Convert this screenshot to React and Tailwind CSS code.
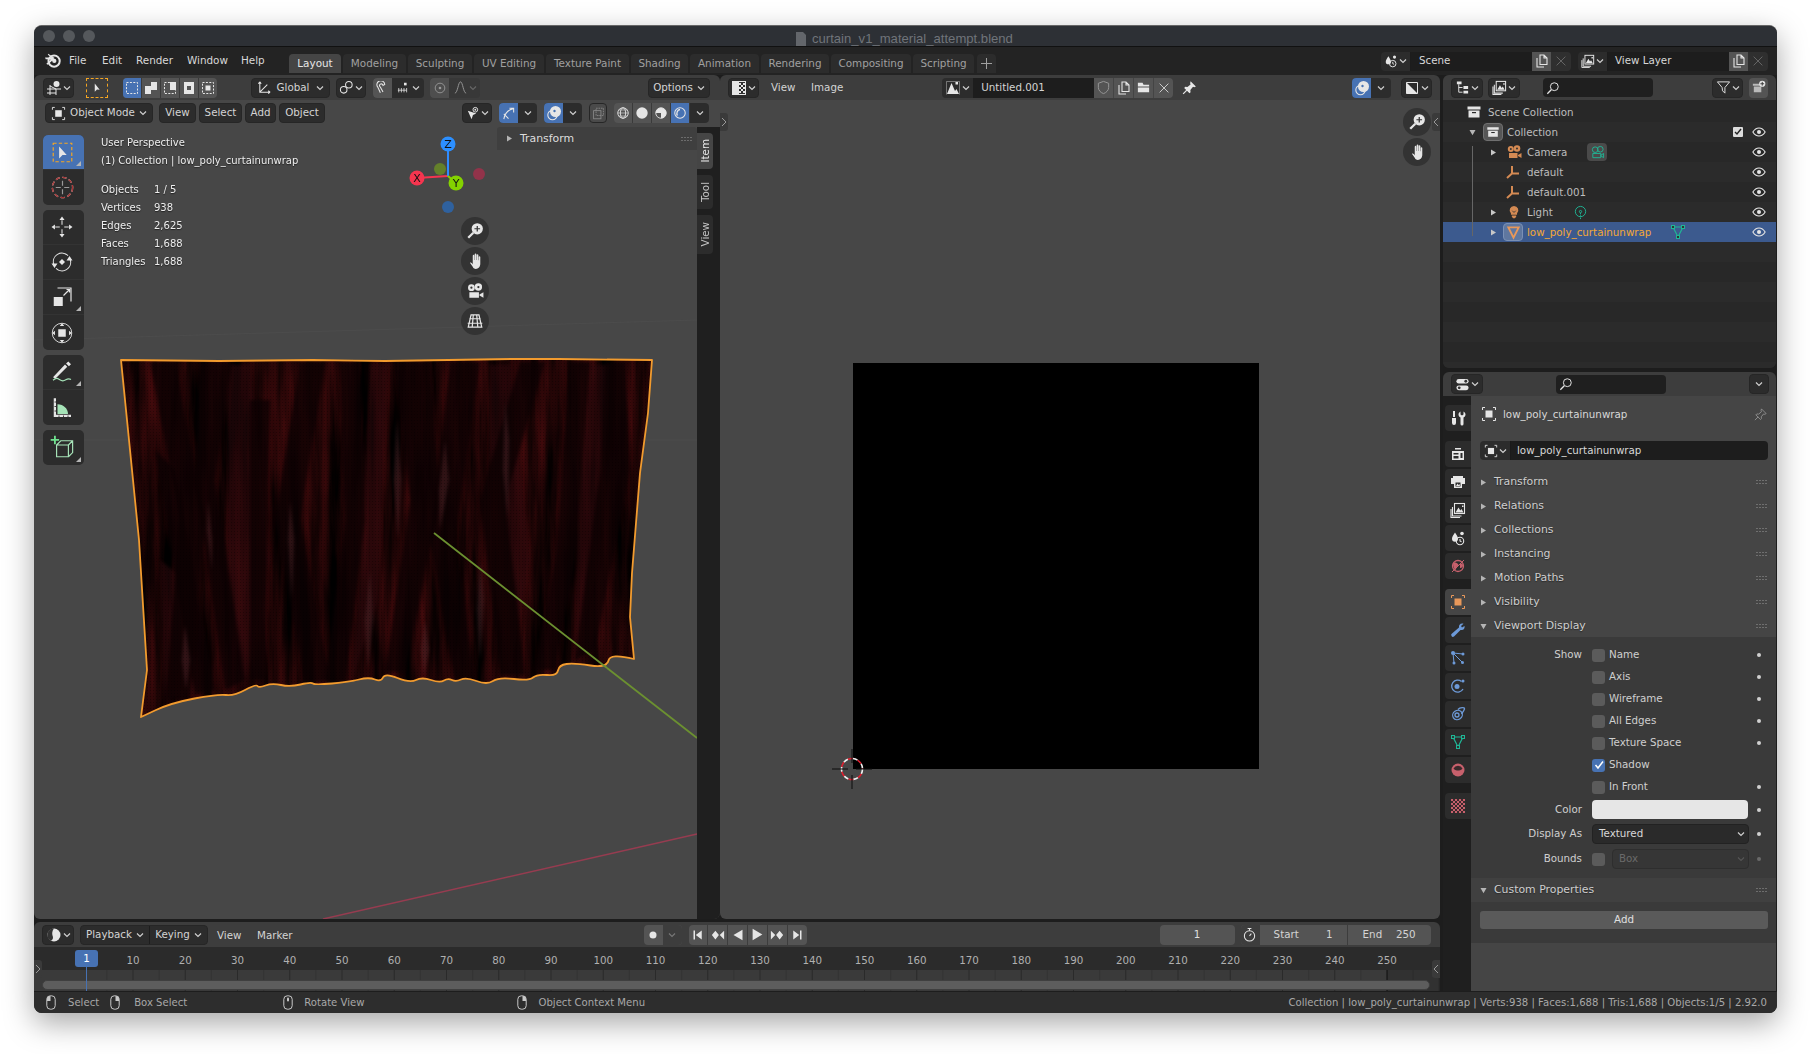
import React from 'react';

const W = '#e6e6e6';
const Chev = ({ c = '#cfcfcf', className = '' }) => (
  <svg width="8" height="8" viewBox="0 0 8 8" className={className}><path d="M1 2.5l3 3 3-3" stroke={c} fill="none" strokeWidth="1.2" /></svg>
);
const S = ({ s = 16, children, className = '', f = W }) => (
  <svg width={s} height={s} viewBox="0 0 16 16" fill={f} className={`shrink-0 ${className}`}>{children}</svg>
);
const L = (p) => <g fill="none" stroke={p.c || W} strokeWidth={p.w || 1.1}>{p.children}</g>;

const Blender = () => (
  <S s={17}>
    <circle cx="9.5" cy="9.5" r="5.3" fill="none" stroke={W} strokeWidth="1.9" />
    <circle cx="9.7" cy="9.4" r="2" />
    <path d="M1 6.2h6.5l2.2 1.6-1.6 1.5-3-1.6H1.6zM4 2.5l6 4-1.3 1.1L3.6 3.6zM2.2 12l4.3-4 1.2 1.2-4.3 3.8z" />
  </S>
);
const View3D = () => (
  <S>
    <circle cx="10.5" cy="4" r="3" /><L w="1"><path d="M1 9h14M4 5v10M10 9v6M1 13h9" /></L>
    <path d="M4 6l6 3" stroke={W} strokeWidth="1" />
  </S>
);
const Arrow = ({ s = 16, f = W }) => <S s={s} f={f}><path d="M5 2v11l3-3 3.6.2z" /></S>;
const Mode = ({ a, b }) => (
  <S>
    {a && <rect x="2.5" y="2.5" width="11" height="11" fill="none" stroke={W} strokeDasharray="2 1.4" />}
    {b}
  </S>
);
const ObjIcon = ({ c = W, s = 16 }) => (
  <S s={s} f={c}>
    <rect x="4.5" y="4.5" width="7" height="7" />
    <path d="M1.5 4V1.5H4M12 1.5h2.5V4M14.5 12v2.5H12M4 14.5H1.5V12" fill="none" stroke={c} strokeWidth="1" />
  </S>
);
const Eye = ({ c = '#e6e6e6', s = 14 }) => (
  <S s={s} f="none">
    <path d="M1 8c2-3.2 4.4-4.6 7-4.6S13 4.800 15 8c-2 3.200-4.400 4.600-7 4.600S3 11.200 1 8z" stroke={c} strokeWidth="1.3" />
    <circle cx="8" cy="8" r="2.300" fill={c} />
  </S>
);
const Search = ({ s = 15 }) => (
  <S s={s}><L><circle cx="9.500" cy="6.500" r="4.500" /><path d="M6 10l-4.500 4.500" strokeWidth="1.500" /></L></S>
);
const Box = ({ s = 16, c = W }) => (
  <S s={s} f={c}><path d="M1.500 2.500h13v3h-13zM2.500 6.500h11v7h-11z" /><rect x="6" y="8" width="4" height="1.200" fill="#2a2a2a" /></S>
);
const Layers = ({ s = 16 }) => (
  <S s={s}>
    <L><path d="M2.500 5v9h9M1 7v8.500h9" /><rect x="4.500" y="1.500" width="10" height="10" /></L>
    <path d="M5.500 10.500l3-5 1.800 3 1.200-1.500 2 3.500zM12 3.500h1.500V5H12z" />
  </S>
);
const Copy = () => (
  <S>
    <L><path d="M3 5v9h7M6 2h4l3 3v6.500H6zM10 2v3h3" /></L>
  </S>
);
const XI = ({ c = '#8b8b8b' }) => <S s={14}><path d="M3 3l10 10M13 3L3 13" stroke={c} strokeWidth="1.100" /></S>;
const SceneI = ({ s = 16 }) => (
  <S s={s}>
    <path d="M5 2.500c1.500 2.700 3 4.200 3 6.300A3 3 0 0 1 2 8.800c0-2.100 1.500-3.600 3-6.300z" /><circle cx="12" cy="3.500" r="1.800" />
    <L><circle cx="10" cy="11" r="3.700" /><path d="M10 9v2l1.500.8" /></L>
  </S>
);
const ImageEd = () => (
  <S>
    <rect x="1.500" y="1.500" width="13" height="13" fill="none" stroke={W} />
    <path d="M1.500 1.500h6.500v13H1.500z" /><path d="M8 3h2v2H8zM12 3h2v2h-2zM10 5h2v2h-2zM8 7h2v2H8zM12 7h2v2h-2zM10 9h2v2h-2zM8 11h2v2H8zM12 11h2v2h-2z" />
  </S>
);
const ImgI = () => <S><path d="M2 14L6.500 3 10 11l1.500-2 2.500 5z" /><rect x="10.500" y="2" width="2.500" height="2.500" /><path d="M1.500 14.500v-13h13v13" fill="none" stroke={W} strokeOpacity=".4" /></S>;
const OverlayI = () => (
  <S>
    <circle cx="9.500" cy="6.500" r="5.500" /><circle cx="6.500" cy="10" r="4.700" fill="none" stroke={W} strokeWidth="1.100" /><circle cx="8.500" cy="6" r="1.200" fill="#4772b3" />
  </S>
);
const Hand = ({ s = 18 }) => (
  <S s={s}>
    <path d="M3.500 9.500c.8-.6 1.600 0 2.500 1.500V3.300c0-1 1.400-1 1.400 0V7h.3V2c0-1 1.500-1 1.500 0v5h.3V2.800c0-1 1.500-1 1.500 0V7.400h.3V4.500c0-1 1.400-1 1.400 0v6c0 2.700-1.700 4.500-4 4.500S6.500 13.800 5.500 12.500z" />
  </S>
);
const Zoom = ({ s = 18 }) => (
  <S s={s}>
    <circle cx="10" cy="6" r="5" /><path d="M6.500 9.500L2 14" stroke={W} strokeWidth="2" />
    <path d="M10 3.500v5M7.500 6h5" stroke="#333" strokeWidth="1.100" />
  </S>
);
const Cam = ({ s = 18, c = W, out = false }) => out ? (
  <S s={s} f="none">
    <g stroke={c} strokeWidth="1"><circle cx="5.500" cy="5" r="3" /><circle cx="11" cy="4.500" r="3" /><path d="M3 9h8.500v4.500H3zM11.500 11l3-2v4.500l-3-2" /></g>
  </S>
) : (
  <S s={s} f={c}>
    <circle cx="4.800" cy="5" r="3" /><circle cx="11" cy="4.500" r="3.300" /><path d="M3 9h8.500v5H3zM12 11l3.500-2v5L12 12z" />
    <circle cx="4.800" cy="5" r="1" fill="#333" /><circle cx="11" cy="4.500" r="1" fill="#333" />
  </S>
);
const Persp = () => (
  <S s={18}><L w="1.100"><path d="M4.500 2.500h7l2.500 11H2zM1.500 10h13M3 6h10M6.500 2.500L5.500 13.500M9.500 2.500l1 11" /></L></S>
);
const Empty = () => (
  <S f="none"><path d="M7 2v8M7 9.500h7M7.500 9L2 14" stroke="#d48a53" strokeWidth="2" /></S>
);
const Grip = () => (
  <svg width="12" height="6" viewBox="0 0 12 6" className="shrink-0">
    {[0, 3, 6, 9].map((x) => [0, 3].map((y) => <rect key={x + '-' + y} x={x + .5} y={y + 1} width="1" height="1" fill="#9a9a9a" />))}
  </svg>
);
const Tri = ({ open, c = '#b5b5b5' }) => (
  <svg width="7" height="7" viewBox="0 0 7 7" className="shrink-0">
    <path d={open ? 'M.5 1h6L3.500 6.200z' : 'M1 .5v6l5-3z'} fill={c} />
  </svg>
);
const MeshTri = ({ c = '#1fb595', s = 16 }) => (
  <S s={s} f="none">
    <path d="M3 3h10L8 13z" stroke={c} strokeWidth="1.200" /><rect x="1.500" y="1.500" width="3" height="3" stroke={c} fill="#333" /><rect x="11.500" y="1.500" width="3" height="3" stroke={c} fill="#333" /><rect x="6.500" y="11.500" width="3" height="3" stroke={c} fill="#333" />
  </S>
);
const Mouse = ({ side }) => (
  <svg width="10" height="15" viewBox="0 0 10 15" className="shrink-0">
    <rect x=".8" y=".8" width="8.400" height="13.400" rx="3.500" fill="none" stroke="#c8c8c8" />
    {side === 'l' && <path d="M1 6V3.500A3 3 0 0 1 4.500 1V6z" fill="#c8c8c8" />}
    {side === 'r' && <path d="M9 6V3.500A3 3 0 0 0 5.500 1V6z" fill="#c8c8c8" />}
    {side === 'm' && <rect x="4" y="2.500" width="2" height="4" rx="1" fill="#c8c8c8" />}
  </svg>
);
const Fold = ({ right, className = '' }) => (
  <div className={`absolute w-[8px] h-[18px] flex items-center justify-center bg-[#3a3a3a] ${right ? 'right-0 rounded-l-[3px]' : 'left-0 rounded-r-[3px]'} ${className}`}>
    <svg width="6" height="10" viewBox="0 0 6 10"><path d={right ? 'M5 1L1 5l4 4' : 'M1 1l4 4-4 4'} stroke="#999" fill="none" /></svg>
  </div>
);

const Pill = ({ className = '', children }) => (
  <div className={`flex items-center justify-center h-[20px] rounded-[4px] bg-[#2c2c2c] border border-[#262626] shrink-0 ${className}`}>{children}</div>
);
const Drop = ({ icon, className = '' }) => <Pill className={`gap-[1px] ${className}`}>{icon}<Chev /></Pill>;
const Cell = ({ className = '', children }) => (
  <div className={`flex items-center justify-center h-full ${className}`}>{children}</div>
);
const Blue = 'bg-[#4772b3]';

function TopBar() {
  const tabs = [
    ['Layout', 'w-[52px]', 1], ['Modeling', 'w-[63px]'], ['Sculpting', 'w-[64px]'], ['UV Editing', 'w-[70px]'], ['Texture Paint', 'w-[83px]'],
    ['Shading', 'w-[57px]'], ['Animation', 'w-[69px]'], ['Rendering', 'w-[68px]'], ['Compositing', 'w-[80px]'], ['Scripting', 'w-[61px]'],
  ];
  return (
    <div className="h-[28px] bg-[#232323] flex items-center relative shrink-0 pl-[10px]">
      <div className="w-[16px] mr-[9px] -mt-[4px]"><Blender /></div>
      <div className="flex text-[10.4px] text-[#d8d8d8] -mt-[1px]">
        <span className="w-[33px]">File</span><span className="w-[34px]">Edit</span><span className="w-[51px]">Render</span><span className="w-[54px]">Window</span><span className="w-[48px]">Help</span>
      </div>
      <div className="flex self-end h-[19px] gap-[2px] mb-[2px]">
        {tabs.map(([t, w, a]) => (
          <div key={t} className={`${w} flex items-center justify-center rounded-t-[4px] text-[10.400px] ${a ? 'bg-[#454545] text-[#e6e6e6]' : 'bg-[#2c2c2c] text-[#a0a0a0]'}`}>{t}</div>
        ))}
        <div className="w-[19px] ml-[1px] flex items-center justify-center rounded-t-[4px] bg-[#2c2c2c]"><svg width="11" height="11" viewBox="0 0 11 11"><path d="M5.500 0v11M0 5.500h11" stroke="#a0a0a0" /></svg></div>
      </div>
      <div className="ml-auto flex items-center h-[19px] mr-[9px] text-[10.300px]">
        <div className="flex items-center justify-center gap-[1px] w-[30px] h-full bg-[#2c2c2c] rounded-l-[4px] border-r border-[#1c1c1c]"><SceneI s={14} /><Chev /></div>
        <div className="w-[121px] h-full bg-[#1d1d1d] flex items-center pl-[8px] text-[#d8d8d8]">Scene</div>
        <Cell className="w-[19px] bg-[#545454]"><Copy /></Cell>
        <Cell className="w-[20px] bg-[#2f2f2f] rounded-r-[4px]"><XI c="#666" /></Cell>
        <div className="w-[7px]" />
        <div className="flex items-center justify-center gap-[1px] w-[30px] h-full bg-[#2c2c2c] rounded-l-[4px] border-r border-[#1c1c1c]"><Layers s={14} /><Chev /></div>
        <div className="w-[121px] h-full bg-[#1d1d1d] flex items-center pl-[7px] text-[#d8d8d8]">View Layer</div>
        <Cell className="w-[19px] bg-[#545454]"><Copy /></Cell>
        <Cell className="w-[20px] bg-[#2f2f2f] rounded-r-[4px]"><XI c="#666" /></Cell>
      </div>
    </div>
  );
}

const HEAD = 'M121 360 L219 361 L313 360 L385 361 L511 359 L559 359 L652 360 L648 413 L640 473 L632 573 L630 617 L634 659';
const HEM = [[610, 653], [607, 668], [574, 663], [559, 665], [557, 676], [537, 674], [529, 681], [499, 677], [487, 685], [466, 677], [456, 682], [448, 678], [440, 683], [422, 677], [410, 683], [385, 673], [381, 682], [369, 677], [349, 682], [315, 685], [311, 682], [290, 687], [272, 683], [259, 688], [256, 684], [234, 696], [218, 694], [171, 703], [141, 717]];
const smooth = () => {
  let d = '';
  HEM.forEach(([x, y], i) => {
    const n = HEM[i + 1];
    if (n) d += ` Q${x} ${y} ${(x + n[0]) / 2} ${(y + n[1]) / 2}`;
    else d += ` L${x} ${y}`;
  });
  return d;
};
const CURTAIN = `${HEAD}${smooth()} L147 670 L139 540 Z`;
const DARK = [
  'M150 362 L175 362 L205 520 L190 700 L165 700 L180 520Z', 'M200 362 L232 362 L215 480 L245 680 L225 690 L195 480Z',
  'M300 362 L325 362 L300 520 L330 680 L305 684 L275 520Z', 'M340 362 L360 362 L365 520 L345 682 L325 682 L345 520Z',
  'M395 362 L430 362 L440 500 L405 672 L385 672 L410 500Z', 'M450 362 L480 362 L455 540 L475 680 L455 680 L430 540Z',
  'M520 362 L545 362 L505 500 L525 675 L500 675 L480 500Z', 'M570 362 L590 362 L575 560 L555 670 L535 670 L555 560Z',
  'M605 362 L625 362 L630 470 L595 650 L575 660 L600 470Z', 'M250 400 L270 400 L265 680 L250 680 Z', 'M155 450 L175 470 L215 690 L195 695Z',
];
const LIGHT = [
  'M228 365 L250 365 L270 560 L244 690 L228 560Z', 'M370 365 L388 365 L378 600 L352 680 L362 560Z', 'M490 365 L510 365 L530 560 L510 675 L490 560Z',
  'M590 365 L610 365 L600 560 L575 660 L580 470Z', 'M160 560 L185 580 L200 690 L165 700Z',
];
const GLINT = [
  'M185 625 L190 660 L186 690 L182 660Z', 'M208 500 L212 540 L212 570 L207 530Z', 'M397 420 L401 480 L398 540 L394 480Z', 'M445 440 L449 480 L440 530 L439 490Z',
  'M505 400 L509 440 L508 520 L503 470Z', 'M370 570 L373 620 L368 670 L365 620Z', 'M480 560 L484 600 L480 660 L477 610Z', 'M290 500 L294 540 L292 600 L288 540Z', 'M425 620 L429 650 L424 675 L421 650Z',
];

function Canvas3D() {
  return (
    <svg className="absolute left-0 top-0 pointer-events-none" width="686" height="844" viewBox="34 75 686 844">
      <defs>
        <clipPath id="cur"><path d={CURTAIN} /></clipPath>
        <filter id="wr" x="0" y="0" width="100%" height="100%" colorInterpolationFilters="sRGB">
          <feTurbulence type="fractalNoise" baseFrequency="0.07 0.006" numOctaves="4" seed="7" />
          <feColorMatrix values=".42 0 0 0 -.09  .07 0 0 0 -.018  .08 0 0 0 -.02  0 0 0 0 1" />
        </filter>
        <filter id="bl" colorInterpolationFilters="sRGB"><feGaussianBlur stdDeviation="1.500" /></filter>
        <pattern id="mesh" width="3" height="3" patternUnits="userSpaceOnUse"><rect width="1" height="1" fill="#000" opacity=".3" /></pattern>
      </defs>
      <path d="M34 340 L697 320 M34 440 L697 440" stroke="#4c4c4c" strokeWidth="1" />
      <path d="M323 919 L697 834" stroke="#963c50" strokeWidth="1.500" />
      <path d="M607 668 L697 738" stroke="#6b9030" strokeWidth="1.800" />
      <g clipPath="url(#cur)">
        <rect x="115" y="355" width="545" height="365" fill="#1a0608" />
        <rect x="115" y="355" width="545" height="365" filter="url(#wr)" />
        <g filter="url(#bl)">
          {LIGHT.map((d) => <path key={d} d={d} fill="#2e0a0c" opacity=".55" />)}
          {DARK.map((d) => <path key={d} d={d} fill="#0c0203" opacity=".75" />)}
          {GLINT.map((d) => <path key={d} d={d} fill="#4c2226" opacity=".55" />)}
        </g>
        <rect x="115" y="355" width="545" height="365" fill="url(#mesh)" />
      </g>
      <path d={CURTAIN} fill="none" stroke="#f29b2e" strokeWidth="1.800" strokeLinejoin="round" />
      <path d="M434 533 L607 668" stroke="#6b9030" strokeWidth="1.800" />
      <g fontFamily="DejaVu Sans, sans-serif" fontSize="11" textAnchor="middle" fill="#111">
        <path d="M448 176 L417 178" stroke="#f5354f" strokeWidth="2" />
        <path d="M448 176 L448 144" stroke="#2f8bff" strokeWidth="2" />
        <path d="M448 176 L456 183" stroke="#8bd000" strokeWidth="2" />
        <circle cx="440" cy="169" r="6" fill="#64802a" /><circle cx="479" cy="174" r="6" fill="#92334a" /><circle cx="448" cy="207" r="6" fill="#2f619e" />
        <circle cx="448" cy="144" r="7.500" fill="#2c8fff" /><circle cx="417" cy="178" r="7.500" fill="#f5354f" /><circle cx="456" cy="183" r="7.500" fill="#84d200" />
        <text x="448" y="148">Z</text><text x="417" y="182">X</text><text x="456" y="187">Y</text>
      </g>
    </svg>
  );
}

function Tool({ active, tri, children }) {
  return (
    <div className={`relative h-[35px] w-[41px] pr-[3px] flex items-center justify-center ${active ? Blue : ''}`}>
      {children}
      {tri && <svg width="5" height="5" viewBox="0 0 5 5" className="absolute right-[3px] bottom-[3px]"><path d="M5 0v5H0z" fill="#b5b5b5" /></svg>}
    </div>
  );
}
const ToolGroup = ({ children, className = '' }) => <div className={`rounded-[5px] overflow-hidden bg-[#2c2c2c] divide-y divide-[#333] ${className}`}>{children}</div>;
const G2 = '#a6e3b8';
function ToolBar() {
  return (
    <div className="flex flex-col gap-[5px] absolute left-[9px] top-[35px]">
      <ToolGroup>
        <Tool active tri><S s={27} f="none"><rect x="2.500" y="2.500" width="11" height="11" stroke="#f5a623" strokeDasharray="2 1.300" strokeWidth=".7" /><path d="M6 4.500v7l2-2 2.500 0z" fill={W} /></S></Tool>
        <Tool><S s={27} f="none"><circle cx="8" cy="8" r="6" stroke="#ddd" strokeWidth=".8" strokeDasharray="2.500 1.500" /><circle cx="8" cy="8" r="6" stroke="#a33" strokeWidth=".8" strokeDasharray="2.500 1.500" strokeDashoffset="4" /><path d="M8 4v3M8 9v3M4 8h3M9 8h3" stroke="#999" strokeWidth=".7" /></S></Tool>
      </ToolGroup>
      <ToolGroup>
        <Tool><S s={24}><path d="M8 1l1.700 2.300H6.300zM8 15l-1.700-2.300h3.400zM1 8l2.300-1.700v3.400zM15 8l-2.300 1.700V6.300z" /><path d="M8 3.500v3M8 9.500v3M3.500 8h3M9.500 8h3" stroke={W} strokeWidth=".7" /></S></Tool>
        <Tool><S s={24}><path d="M8 6l2 2-2 2-2-2z" /><path d="M2.500 9.500A5.700 5.700 0 0 1 12 3.800M13.500 6.500A5.700 5.700 0 0 1 4 12.200" fill="none" stroke={W} strokeWidth=".7" /><path d="M11 7h4l-2-3zM1 9h4l-2 3z" /></S></Tool>
        <Tool tri><S s={24}><rect x="2.500" y="8" width="6" height="6" /><path d="M5 2h9v9M9 7l4-4M11 3h2v2" fill="none" stroke={W} strokeWidth=".8" /></S></Tool>
        <Tool><S s={24}><rect x="5.500" y="5.500" width="5" height="5" /><circle cx="8" cy="8" r="6.500" fill="none" stroke={W} strokeWidth=".6" /><path d="M8 1.500l1.500 1.800h-3zM8 14.500l-1.500-1.800h3zM1.500 8l1.800-1.500v3zM14.500 8l-1.800 1.500v-3z" /></S></Tool>
      </ToolGroup>
      <ToolGroup>
        <Tool tri><S s={24}><path d="M2 11.500l1.500 1 8-8-1.500-1.500zM10.700 2.300L12.200 1l1.800 1.800-1.400 1.400z" /><path d="M2 13.500c3-2.500 3.500-.5 6 .3 2.500.7 3 -2.500 6-.8" fill="none" stroke={G2} strokeWidth=".8" /></S></Tool>
        <Tool><S s={24}><path d="M3 1.500h1v11h10V14H2.500V1.500z" /><path d="M5 12V5.500C9 5.500 12 8.500 12 12z" fill={G2} /><path d="M3 4h1M3 7h1M3 10h1M6 13v1M9 13v1M12 13v1" stroke="#333" strokeWidth=".6" /></S></Tool>
      </ToolGroup>
      <ToolGroup>
        <Tool tri><S s={27} f="none"><path d="M4.500 6.500h7v7h-7zM4.500 6.500l2.500-2.500h7v7l-2.500 2.500M11.500 6.500L14 4" stroke={G2} strokeWidth=".7" /><path d="M3.500 1v5M1 3.500h5" stroke="#6fe08f" strokeWidth="1.100" /></S></Tool>
      </ToolGroup>
    </div>
  );
}
const NavBtn = ({ children }) => <div className="w-[28px] h-[28px] rounded-full bg-[#333333] flex items-center justify-center">{children}</div>;
const Tab = ({ t, cls, active }) => (
  <div className={`w-[16px] ${cls} rounded-r-[4px] flex items-center justify-center ${active ? 'bg-[#454545] text-[#e6e6e6]' : 'bg-[#2c2c2c] text-[#c4c4c4]'}`}>
    <span className="[writing-mode:vertical-rl] rotate-180 text-[10.300px] relative left-[1px]">{t}</span>
  </div>
);

function Viewport() {
  const stats = [['Objects', '1 / 5'], ['Vertices', '938'], ['Edges', '2,625'], ['Faces', '1,688'], ['Triangles', '1,688']];
  return (
    <div className="w-[686px] flex flex-col relative rounded-[6px] overflow-hidden">
      <div className="h-[25px] bg-[#3d3d3d] flex items-center pl-[9px] pr-[10px] shrink-0 text-[10.300px] text-[#d4d4d4]">
        <Drop className="w-[31px]" icon={<View3D />} />
        <div className="ml-[12px] w-[22px] h-[20px] border border-dashed border-[#f5a623] flex items-center justify-center"><Arrow s={12} /></div>
        <div className="ml-[15px] w-[94px] h-[20px] flex rounded-[4px] overflow-hidden bg-[#545454] divide-x divide-[#3a3a3a]">
          <Cell className={`flex-1 ${Blue}`}><Mode a /></Cell>
          <Cell className="flex-1"><Mode b={<path d="M2 6h6V2h6v8H8v4H2z" />} /></Cell>
          <Cell className="flex-1"><Mode a b={<path d="M8 2h6v8H8z" />} /></Cell>
          <Cell className="flex-1"><Mode b={<path fillRule="evenodd" d="M3 2h10v12H3zM6 6v4h4V6z" />} /></Cell>
          <Cell className="flex-1"><Mode a b={<rect x="5.500" y="5.500" width="5" height="5" />} /></Cell>
        </div>
        <Pill className="ml-[34px] w-[79px] gap-[5px]"><S s={15}><L><path d="M3 2v11h11M3 13l8-8M3 2l-1.500 2M3 2l1.500 2M14 13l-2-1.500M14 13l-2 1.500" /></L></S><span>Global</span><Chev className="ml-[2px]" /></Pill>
        <Drop className="ml-[6px] w-[30px]" icon={<S s={15}><L><circle cx="10.500" cy="5" r="3.500" /><circle cx="5" cy="10.500" r="3.500" /></L></S>} />
        <div className="ml-[7px] w-[51px] h-[20px] flex rounded-[4px] overflow-hidden bg-[#2c2c2c]">
          <Cell className="w-[19px] bg-[#545454]"><S s={14}><L w="1.200"><path d="M5 13.500L2 7a4.500 4.500 0 1 1 8-3l-2 1A2 2 0 1 0 5 7l3 5.500" /></L></S></Cell>
          <Cell className="flex-1 gap-[1px]"><S s={14}><path d="M1 10.500h10M2 8v5M5 8v5M8 8v5M11 8v5" stroke={W} strokeWidth=".9" /><rect x="8" y="2" width="3" height="3" /></S><Chev /></Cell>
        </div>
        <div className="ml-[6px] w-[50px] h-[20px] flex rounded-[4px] overflow-hidden bg-[#383838]">
          <Cell className="w-[19px] bg-[#4e4e4e]"><S s={14} f="#9a9a9a"><circle cx="8" cy="8" r="5.500" fill="none" stroke="#9a9a9a" /><circle cx="8" cy="8" r="1.500" /></S></Cell>
          <Cell className="flex-1 gap-[1px]"><S s={15} f="none"><path d="M2 14C5 14 5.500 2 8 2s3 12 6 12" stroke="#9a9a9a" /></S><Chev c="#666" /></Cell>
        </div>
        <Pill className="ml-auto w-[62px] gap-[4px]">Options<Chev /></Pill>
      </div>
      <div className="relative flex-1 bg-[#474747]">
        <div className="absolute left-0 top-[-25px]"><Canvas3D /></div>
        <div className="relative h-[26px] flex items-center pl-[11px] pr-[11px] text-[10.300px] text-[#d4d4d4]">
          <Pill className="w-[108px] gap-[4px]"><ObjIcon s={15} /><span>Object Mode</span><Chev /></Pill>
          <Pill className="ml-[6px] w-[37px]">View</Pill>
          <Pill className="ml-[3px] w-[43px]">Select</Pill>
          <Pill className="ml-[3px] w-[31px]">Add</Pill>
          <Pill className="ml-[3px] w-[46px]">Object</Pill>
          <Pill className="ml-auto w-[30px] gap-[1px]"><S s={15}><path d="M3 5l9 3-3.500 1.500L7 14z" /><circle cx="11" cy="4" r="2.500" fill="none" stroke={W} /><circle cx="11" cy="4" r="1" /></S><Chev /></Pill>
          <div className="ml-[7px] w-[38px] h-[20px] flex rounded-[4px] overflow-hidden bg-[#2c2c2c]">
            <Cell className={`w-[19px] ${Blue}`}><S s={15}><L><path d="M3 14C4 8 8 4 13 3M9 2.500h4.500V7M3 8.500L8 13.500" /></L></S></Cell>
            <Cell className="flex-1"><Chev /></Cell>
          </div>
          <div className="ml-[7px] w-[38px] h-[20px] flex rounded-[4px] overflow-hidden bg-[#2c2c2c]">
            <Cell className={`w-[19px] ${Blue}`}><OverlayI /></Cell>
            <Cell className="flex-1"><Chev /></Cell>
          </div>
          <Pill className="ml-[7px] w-[18px] !bg-[#4a4a4a]"><S s={13} f="none"><rect x="5" y="1.500" width="9" height="9" stroke="#8d8d8d" strokeDasharray="2 1" /><rect x="2" y="4.500" width="9" height="10" stroke="#8d8d8d" /></S></Pill>
          <div className="ml-[7px] w-[95px] h-[20px] flex rounded-[4px] overflow-hidden bg-[#545454] divide-x divide-[#3a3a3a]">
            <Cell className="w-[19px]"><S s={14} f="none"><circle cx="8" cy="8" r="6" stroke={W} /><ellipse cx="8" cy="8" rx="3" ry="6" stroke={W} /><path d="M2 8h12M3 4.500h10M3 11.500h10" stroke={W} strokeWidth=".7" /></S></Cell>
            <Cell className="w-[19px]"><S s={14}><circle cx="8" cy="8" r="6.500" /></S></Cell>
            <Cell className="w-[19px]"><S s={14}><circle cx="8" cy="8" r="6" fill="none" stroke={W} /><path d="M8 2a6 6 0 0 1 6 6 6 6 0 0 1-6 6V8H2a6 6 0 0 1 6-6z" /></S></Cell>
            <Cell className={`w-[19px] ${Blue}`}><S s={14} f="none"><circle cx="8" cy="8" r="6" stroke={W} strokeWidth="1.200" /><path d="M5 11C3.500 8 5 4.500 8 4" stroke={W} strokeWidth="1.500" /></S></Cell>
            <Cell className="flex-1 bg-[#2c2c2c]"><Chev /></Cell>
          </div>
        </div>
        <ToolBar />
        <div className="absolute left-[67px] top-[34px] text-[10px] text-[#eeeeee] leading-[18px] [text-shadow:0_1px_1px_#222]">
          <div>User Perspective</div>
          <div>(1) Collection | low_poly_curtainunwrap</div>
          <div className="mt-[11px]">
            {stats.map(([a, b]) => <div key={a} className="flex"><span className="w-[53px]">{a}</span><span>{b}</span></div>)}
          </div>
        </div>
        <div className="absolute left-[427px] top-[117px] flex flex-col gap-[2px]">
          <NavBtn><Zoom /></NavBtn><NavBtn><Hand /></NavBtn><NavBtn><Cam /></NavBtn><NavBtn><Persp /></NavBtn>
        </div>
        <div className="absolute left-[463px] top-[27px] w-[200px] h-[23px] bg-[#3f3f3f] rounded-t-[3px] flex items-center pl-[9px] pr-[4px] text-[10.900px] text-[#dddddd]">
          <Tri /><span className="ml-[7px] relative top-[1px]">Transform</span><div className="ml-auto"><Grip /></div>
        </div>
        <div className="absolute left-[663px] top-[27px] bottom-0 w-[23px] bg-[#1f1f1f] flex flex-col gap-[6px] pt-[6px]">
          <Tab t="Item" cls="h-[36px]" active /><Tab t="Tool" cls="h-[34px]" /><Tab t="View" cls="h-[39px]" />
        </div>
      </div>
    </div>
  );
}

function ImageEditor() {
  return (
    <div className="w-[720px] flex flex-col relative rounded-[6px] overflow-hidden">
      <div className="h-[25px] bg-[#3d3d3d] flex items-center pl-[8px] shrink-0 text-[10.300px] text-[#d4d4d4]">
        <Drop className="w-[31px]" icon={<ImageEd />} />
        <span className="ml-[12px] w-[40px]">View</span><span>Image</span>
        <div className="ml-[99px] flex items-center h-[20px]">
          <div className="flex items-center justify-center gap-[1px] w-[31px] h-full bg-[#2c2c2c] rounded-l-[4px]"><ImgI /><Chev /></div>
          <div className="w-[121px] h-full bg-[#1d1d1d] flex items-center pl-[8px]">Untitled.001</div>
          <Cell className="w-[20px] bg-[#545454] border-r border-[#444]"><S s={15} f="none"><path d="M8 1.500L13.500 3.500V8c0 3-2.500 5.500-5.500 6.500C5 13.500 2.500 11 2.500 8V3.500z" stroke="#9a9a9a" /></S></Cell>
          <Cell className="w-[20px] bg-[#545454] border-r border-[#444]"><Copy /></Cell>
          <Cell className="w-[20px] bg-[#545454] border-r border-[#444]"><S s={15}><path d="M2 3h5l1 2h6v2H2zM2 8h12v5H2z" /></S></Cell>
          <Cell className="w-[19px] bg-[#545454] rounded-r-[4px]"><XI c="#cfcfcf" /></Cell>
          <div className="ml-[8px]"><S s={17}><path d="M9 2l5 5-1.500.8-1.200-.4-2.500 3 .2 2-1 1-5-5 1-1 2 .2 3-2.500-.4-1.200z" /><path d="M5.500 10.500L2 14" stroke={W} strokeWidth="1.200" /></S></div>
        </div>
        <div className="ml-auto mr-[8px] flex items-center gap-[10px]">
          <div className="w-[39px] h-[20px] flex rounded-[4px] overflow-hidden bg-[#2c2c2c]">
            <Cell className={`w-[19px] ${Blue}`}><OverlayI /></Cell><Cell className="flex-1"><Chev /></Cell>
          </div>
          <Drop className="w-[31px]" icon={<S><path d="M2.500 2.500h11v11h-11z" fill="none" stroke={W} /><path d="M2.500 2.500L13.500 13.500H2.500z" /></S>} />
        </div>
      </div>
      <div className="relative flex-1 bg-[#474747] flex">
        <div className="mt-[263px] ml-[133px] w-[406px] h-[406px] bg-black" />
        <svg className="absolute left-[111px] top-[648px]" width="42" height="42" viewBox="0 0 42 42">
          <circle cx="21" cy="21" r="10.500" fill="none" stroke="#f0f0f0" strokeWidth="1.600" strokeDasharray="5 5" />
          <circle cx="21" cy="21" r="10.500" fill="none" stroke="#e02030" strokeWidth="1.600" strokeDasharray="5 5" strokeDashoffset="5" />
          <path d="M1 21h16M25 21h16M21 1v14M21 27v14" stroke="#0c0c0c" strokeWidth="1" />
        </svg>
        <div className="absolute left-[683px] top-[8px] flex flex-col gap-[2px]">
          <NavBtn><Zoom /></NavBtn><NavBtn><Hand /></NavBtn>
        </div>
        <Fold right className="top-[13px]" />
        <Fold className="top-[13px]" />
      </div>
    </div>
  );
}

function Timeline() {
  const labels = [10, 20, 30, 40, 50, 60, 70, 80, 90, 100, 110, 120, 130, 140, 150, 160, 170, 180, 190, 200, 210, 220, 230, 240, 250];
  const X = (f) => 133 + (f - 10) * 5.225 - 34;
  const ticks = [];
  for (let f = 5; f <= 265; f += 5) ticks.push(f);
  return (
    <div className="h-[69px] mt-[3px] flex flex-col rounded-t-[6px] overflow-hidden shrink-0">
      <div className="h-[25px] bg-[#3d3d3d] flex items-center pl-[8px] text-[10.300px] text-[#d4d4d4] shrink-0">
        <Drop className="w-[32px]" icon={<S><circle cx="8" cy="8" r="6.500" /><path d="M8 1.500a6.500 6.500 0 0 0-3 12.300c2-1 2.500-3.500 1.500-5.300C6 7 6 3.500 8 1.500z" fill="#333" /></S>} />
        <div className="ml-[6px] w-[128px] h-[20px] flex rounded-[4px] bg-[#2c2c2c] border border-[#262626]">
          <Cell className="w-[69px] gap-[4px] border-r border-[#1d1d1d]">Playback<Chev /></Cell>
          <Cell className="flex-1 gap-[4px]">Keying<Chev /></Cell>
        </div>
        <span className="ml-[9px] w-[40px] relative top-[1px]">View</span><span className="relative top-[1px]">Marker</span>
        <div className="ml-[351px] w-[38px] h-[20px] flex rounded-[4px] overflow-hidden bg-[#545454]">
          <Cell className="w-[19px]"><svg width="8" height="8"><circle cx="4" cy="4" r="3.500" fill={W} /></svg></Cell>
          <Cell className="flex-1 bg-[#3d3d3d]"><Chev c="#777" /></Cell>
        </div>
        <div className="ml-[7px] w-[118px] h-[20px] flex rounded-[4px] overflow-hidden bg-[#545454] divide-x divide-[#3d3d3d]">
          <Cell className="flex-1"><S s={12}><path d="M2 2h2v12H2zM13 2v12L5 8z" /></S></Cell>
          <Cell className="flex-1"><S s={14}><path d="M5 3l4 5-4 5-4-5zM15 3v10L10 8z" /></S></Cell>
          <Cell className="flex-1"><S s={12}><path d="M14 1v14L2 8z" /></S></Cell>
          <Cell className="flex-1"><S s={13}><path d="M2 1v14l12-7z" /></S></Cell>
          <Cell className="flex-1"><S s={14}><path d="M1 3v10l5-5zM11 3l4 5-4 5-4-5z" /></S></Cell>
          <Cell className="flex-1"><S s={12}><path d="M12 2h2v12h-2zM3 2v12l8-6z" /></S></Cell>
        </div>
        <div className="ml-[353px] w-[75px] h-[20px] rounded-[4px] bg-[#545454] flex items-center justify-center text-[#e0e0e0]">1</div>
        <div className="ml-[6px] w-[190px] h-[20px] flex rounded-[4px] overflow-hidden bg-[#545454] divide-x divide-[#3d3d3d]">
          <Cell className="w-[19px] bg-[#3d3d3d]"><S s={15}><L><circle cx="8" cy="9.500" r="5.500" /><path d="M6 1.500h4M8 2v2M8 9.500l2-2.500" /></L></S></Cell>
          <div className="w-[88px] flex items-center justify-between px-[14px]"><span>Start</span><span>1</span></div>
          <div className="flex-1 flex items-center justify-between px-[15px]"><span>End</span><span>250</span></div>
        </div>
      </div>
      <div className="relative flex-1 bg-[#2b2b2b]">
        <div className="absolute inset-x-0 top-[23px] bottom-0 bg-[#3a3a3a]" />
        <svg className="absolute left-0 top-[23px]" width="1406" height="21">
          {ticks.map((f) => <path key={f} d={`M${X(f)} 0V21`} stroke={f % 10 === 0 ? '#2a2a2a' : '#343434'} />)}
          <path d={`M${X(250)} 0V21`} stroke="#161616" />
          <rect x={X(250)} width="60" height="21" fill="#000" opacity=".15" />
        </svg>
        {labels.map((f) => (
          <span key={f} className="absolute top-[6px] -translate-x-1/2 text-[10.300px] text-[#b0b0b0]" style={{ left: X(f) }}>{f}</span>
        ))}
        <div className="absolute left-[8px] right-[10px] bottom-[1px] h-[10px] rounded-full bg-[#5d5d5d] border border-[#3f3f3f]" />
        <div className="absolute left-[51.500px] top-[20px] bottom-0 w-[1px] bg-[#4772b3]" />
        <div className="absolute left-[41px] top-[3px] w-[23px] h-[17px] rounded-[3px] bg-[#4772b3] flex items-center justify-center text-[10.300px] text-white">1</div>
        <Fold className="top-[13px]" />
        <Fold right className="top-[13px]" />
      </div>
    </div>
  );
}

function Outliner() {
  const Row = ({ i, sel, children, eye = true, chk }) => (
    <div className={`h-[20px] flex items-center relative ${sel ? 'bg-[#3c5a8e]' : i % 2 ? 'bg-[#2b2b2b]' : 'bg-[#282828]'}`}>
      {children}
      {chk && <div className="absolute left-[290px] w-[10px] h-[10px] rounded-[1px] bg-[#dcdcdc] flex items-center justify-center"><svg width="8" height="8" viewBox="0 0 8 8"><path d="M1 4l2 2 4-5" stroke="#222" strokeWidth="1.400" fill="none" /></svg></div>}
      {eye && <div className="absolute left-[309px]"><Eye /></div>}
    </div>
  );
  const txt = 'text-[10.300px] text-[#bdbdbd] relative top-[1px]';
  return (
    <div className="h-[293px] flex flex-col rounded-[6px] overflow-hidden relative shrink-0 bg-[#282828]">
      <div className="h-[25px] bg-[#3d3d3d] flex items-center pl-[8px] pr-[8px] shrink-0">
        <Drop className="w-[32px]" icon={<S s={15}><path d="M2 1.500h5v3H2zM9 6.500h5v3H9zM9 11.500h5v3H9z" /><path d="M4 4.500v8.500h4M4 8h4" fill="none" stroke={W} /></S>} />
        <Drop className="ml-[5px] w-[32px]" icon={<Layers s={15} />} />
        <div className="ml-[23px] w-[110px] h-[19px] rounded-[4px] bg-[#1f1f1f] flex items-center pl-[3px]"><Search s={14} /></div>
        <Drop className="ml-auto w-[31px]" icon={<S s={15} f="none"><path d="M1.500 2h13L9.500 8v6L7 11.500 6.500 8z" stroke={W} /></S>} />
        <div className="ml-[6px] w-[19px] h-[20px] rounded-[4px] bg-[#545454] flex items-center justify-center"><S s={15}><path d="M2 4h9v2H2zM3 7h8v6H3z" opacity=".7" /><circle cx="12" cy="4" r="3.300" /><path d="M12 2v4M10 4h4" stroke="#333" /></S></div>
      </div>
      <div className="pt-[2px]">
        <Row i={0} eye={false}><div className="ml-[23px]"><Box /></div><span className={`ml-[6px] ${txt}`}>Scene Collection</span></Row>
        <Row i={1} chk><div className="ml-[26px]"><Tri open /></div><div className="ml-[7px] w-[20px] h-[18px] rounded-[4px] bg-[#565656] border border-[#707070] flex items-center justify-center"><Box s={14} /></div><span className={`ml-[4px] ${txt}`}>Collection</span></Row>
        <Row i={0}><div className="ml-[47px]"><Tri c="#c8c8c8" /></div><div className="ml-[9px] w-[16px]"><Cam s={16} c="#d48a53" /></div><span className={`ml-[5px] w-[60px] ${txt}`}>Camera</span><div className="w-[20px] h-[18px] rounded-[4px] bg-[#4a4a4a] flex items-center justify-center"><Cam out s={15} c="#1fb595" /></div></Row>
        <Row i={1}><div className="ml-[62px]"><Empty /></div><span className={`ml-[6px] ${txt}`}>default</span></Row>
        <Row i={0}><div className="ml-[62px]"><Empty /></div><span className={`ml-[6px] ${txt}`}>default.001</span></Row>
        <Row i={1}><div className="ml-[47px]"><Tri c="#c8c8c8" /></div><div className="ml-[10px]"><S s={14} f="#d48a53"><path d="M8 1a5 5 0 0 1 3.500 8.500V11h-7V9.500A5 5 0 0 1 8 1zM5.500 12h5v1.500L9 15H7l-1.500-1.500z" /><path d="M6 6.500l2 2 2-2" stroke="#333" fill="none" /></S></div><span className={`ml-[6px] w-[46px] ${txt}`}>Light</span><S s={15} f="none"><circle cx="8" cy="7" r="5.500" stroke="#1fb595" /><circle cx="8" cy="7" r="1.200" stroke="#1fb595" /><path d="M8 8.500V15" stroke="#1fb595" strokeDasharray="1.500 1" /></S></Row>
        <Row i={0} sel><div className="ml-[47px]"><Tri c="#c8c8c8" /></div><div className="ml-[6px] w-[20px] h-[18px] rounded-[4px] bg-[#5f779f] border border-[#7a90b5] flex items-center justify-center"><S s={15} f="none"><path d="M2.500 2.500h11L8 13.500z" stroke="#e8985a" strokeWidth="2" /></S></div><span className={`ml-[4px] w-[143px] text-[10.300px] text-[#f4a836] relative top-[1px]`}>low_poly_curtainunwrap</span><MeshTri /></Row>
        {[1, 0, 1, 0, 1, 0, 1].map((a, k) => <Row key={k} i={a} eye={false} />)}
      </div>
      <div className="absolute left-[29px] top-[71px] h-[90px] w-[1px] bg-[#666]" />
    </div>
  );
}

const Nav = ({ active, children, cls = '' }) => (
  <div className={`h-[26px] w-[26px] ml-[2px] rounded-l-[4px] flex items-center justify-center ${active ? 'bg-[#454545]' : 'bg-[#2c2c2c]'} ${cls}`}>{children}</div>
);
const BLUEI = '#6d9ad8';
const RED = '#c7606c';
function Properties() {
  const panels = ['Transform', 'Relations', 'Collections', 'Instancing', 'Motion Paths', 'Visibility'];
  const Lab = ({ t }) => <span className="w-[111px] text-right text-[10.300px] text-[#cfcfcf]">{t}</span>;
  const Dot = ({ c = '#d0d0d0' }) => <span className="absolute left-[286px] w-[4px] h-[4px] rounded-full" style={{ background: c }} />;
  const Chk = ({ on }) => (
    <div className={`w-[13px] h-[13px] rounded-[3px] shrink-0 flex items-center justify-center ${on ? 'bg-[#4772b3]' : 'bg-[#5b5b5b]'}`}>
      {on && <svg width="10" height="10" viewBox="0 0 10 10"><path d="M1.500 5l2.500 3 5-6.500" stroke="#fff" strokeWidth="1.500" fill="none" /></svg>}
    </div>
  );
  const checks = [['Show', 'Name'], ['', 'Axis'], ['', 'Wireframe'], ['', 'All Edges'], ['', 'Texture Space'], ['', 'Shadow', 1], ['', 'In Front']];
  const Head = ({ t, open, bg = '' }) => (
    <div className={`h-[24px] flex items-center pl-[9px] pr-[8px] text-[10.900px] text-[#cecece] [text-shadow:0_1px_1px_#2a2a2a] ${bg}`}>
      <Tri open={open} /><span className="ml-[7px]">{t}</span><div className="ml-auto"><Grip /></div>
    </div>
  );
  return (
    <div className="flex-1 mt-[4px] flex flex-col rounded-t-[6px] overflow-hidden relative">
      <div className="h-[24px] bg-[#3d3d3d] flex items-center pl-[8px] pr-[7px] shrink-0">
        <Drop className="w-[32px]" icon={<S s={15}><rect x="1.500" y="2" width="13" height="5" rx="2.500" /><rect x="1.500" y="9" width="13" height="5" rx="2.500" /><circle cx="11.500" cy="4.500" r="1.500" fill="#333" /><circle cx="4.500" cy="11.500" r="1.500" fill="#333" /></S>} />
        <div className="ml-[73px] w-[110px] h-[19px] rounded-[4px] bg-[#1f1f1f] flex items-center pl-[3px]"><Search s={14} /></div>
        <Pill className="ml-auto w-[20px]"><Chev /></Pill>
      </div>
      <div className="flex-1 flex min-h-0">
        <div className="w-[28px] bg-[#1f1f1f] flex flex-col pt-[9px] gap-[2px]">
          <Nav><S><path d="M3 1h2v6H3zM2 8h4v5a2 2 0 0 1-4 0zM10.500 1.500v3l1.500 1 1.500-1v-3c1.500.8 2 2 2 3 0 1.500-1 2.700-2 3V14a1.500 1.500 0 0 1-3 0V7.500c-1-.3-2-1.500-2-3 0-1 .5-2.200 2-3z" /></S></Nav>
          <div className="h-[6px]" />
          <Nav><S><path fillRule="evenodd" d="M2 5h12v9H2zM3.500 7v1.500h5V7zM10.500 7v5h2V7zM3.500 10v2.500h5V10zM5 2h6v1.500H5z" /></S></Nav>
          <Nav><S><path fillRule="evenodd" d="M3 2h10v2h2v6h-3v4H4v-4H1V4h2zM5.500 8.500V12.500h5V8.500z" /><path d="M6 12l1.500-2.500 1 1.500 1-1 .5 2z" /></S></Nav>
          <Nav><Layers /></Nav>
          <Nav><SceneI /></Nav>
          <Nav><S f={RED}><circle cx="8" cy="8" r="5.500" fill="none" stroke={RED} strokeWidth="1.300" /><path d="M3 5c2-1 4 0 5 1s0 2-1 2.500-.5 3-1.500 3.500C4 11 3 8 3 5zM10 6c1.500-1 3 0 3 1.500 0 1.500-2 3-3 2.500z" /><path d="M2 14L14 2" stroke={RED} /></S></Nav>
          <div className="h-[6px]" />
          <Nav active><S f="#e8985a"><rect x="4.500" y="4.500" width="7" height="7" /><path d="M1.500 4V1.500H4M12 1.500h2.500V4M14.500 12v2.500H12M4 14.500H1.500V12" fill="none" stroke="#e8985a" /></S></Nav>
          <Nav><S f={BLUEI}><path d="M2 11.500L9 5.500C8.500 3 10.500 1 13.500 1.800L11 4l1 1.500 2.500-1.500c.7 2.500-1.300 4.500-4 4L4 14.500a1.800 1.800 0 0 1-2-3z" /></S></Nav>
          <Nav><S f={BLUEI}><circle cx="3" cy="3" r="2" /><circle cx="13" cy="4" r="1.500" /><circle cx="4" cy="13" r="1.500" /><circle cx="12.500" cy="12.500" r="1.500" /><path d="M3 3l10 1M3 3l1 10M3 3l9.500 9.500" stroke={BLUEI} /></S></Nav>
          <Nav><S f={BLUEI}><circle cx="7" cy="8.500" r="2.500" /><path d="M11.500 3.500A6 6 0 1 0 13 11" fill="none" stroke={BLUEI} strokeWidth="1.300" /><circle cx="13" cy="3" r="1.500" /></S></Nav>
          <Nav><S f="none"><ellipse cx="7.500" cy="9" rx="5" ry="4.500" stroke={BLUEI} transform="rotate(-35 7.500 9)" strokeWidth="1.300" /><circle cx="7" cy="9" r="2" stroke={BLUEI} strokeWidth="1.300" /><path d="M8 3.500C10 1 15 1 14.500 3c-.4 1.500-1.500 3-3 5" stroke={BLUEI} strokeWidth="1.300" /></S></Nav>
          <Nav><MeshTri /></Nav>
          <Nav><S f={RED}><circle cx="8" cy="8" r="6.500" /><path d="M3.500 6.500A5 5 0 0 1 12.500 6.500C11 8.500 9 8.500 8 8.500S5 8.500 3.500 6.500z" fill="#3a2a2c" /></S></Nav>
          <div className="h-[6px]" />
          <Nav><svg width="14" height="14" viewBox="0 0 14 14">
            <rect width="14" height="14" fill="#3a2a2c" />
            {[0, 1, 2, 3, 4, 5, 6].flatMap((y) => [0, 1, 2, 3, 4, 5, 6].filter((x) => (x + y) % 2 === 0).map((x) => <rect key={x + '_' + y} x={x * 2} y={y * 2} width="2" height="2" fill={RED} />))}
          </svg></Nav>
        </div>
        <div className="flex-1 bg-[#454545] flex flex-col relative">
          <div className="h-[36px] flex items-center pl-[10px] pr-[8px] text-[10.300px] text-[#d8d8d8]"><ObjIcon /><span className="ml-[6px] relative top-[1px]">low_poly_curtainunwrap</span>
            <div className="ml-auto"><S s={15} f="none"><path d="M9 2l5 5-1.500.8-1.200-.4-2.500 3 .2 2-1 1-5-5 1-1 2 .2 3-2.500-.4-1.200zM5.500 10.500L2 14" stroke="#8f8f8f" /></S></div>
          </div>
          <div className="mt-[9px] ml-[9px] mr-[8px] h-[19px] flex rounded-[4px] overflow-hidden">
            <div className="w-[31px] bg-[#2c2c2c] flex items-center justify-center gap-[1px] border-r border-[#1a1a1a]"><ObjIcon s={14} /><Chev /></div>
            <div className="flex-1 bg-[#1d1d1d] flex items-center pl-[6px] text-[10.300px] text-[#d8d8d8]">low_poly_curtainunwrap</div>
          </div>
          <div className="mt-[10px]">
            {panels.map((p) => <Head key={p} t={p} />)}
            <Head t="Viewport Display" open />
          </div>
          <div className="bg-[#3a3a3a] -mt-[1px] h-[241px] pt-[7px]">
            {checks.map(([a, b, on]) => (
              <div key={b} className="h-[22px] flex items-center relative text-[10.300px] text-[#cfcfcf]">
                <Lab t={a} /><div className="ml-[10px]"><Chk on={on} /></div><span className="ml-[4px]">{b}</span>{!on && <Dot />}
              </div>
            ))}
            <div className="h-[19px] mt-[2px] flex items-center relative">
              <Lab t="Color" /><div className="ml-[10px] w-[156px] h-[19px] rounded-[4px] bg-[#e6e6e6]" /><Dot />
            </div>
            <div className="h-[20px] mt-[5px] flex items-center relative">
              <Lab t="Display As" /><div className="ml-[10px] w-[157px] h-[20px] rounded-[4px] bg-[#2a2a2a] border border-[#222] flex items-center pl-[6px] pr-[3px] text-[10.300px] text-[#d8d8d8] justify-between">Textured<Chev /></div><Dot />
            </div>
            <div className="h-[20px] mt-[5px] flex items-center relative">
              <Lab t="Bounds" /><div className="ml-[10px]"><Chk /></div><div className="ml-[7px] w-[137px] h-[20px] rounded-[4px] bg-[#363636] border border-[#2e2e2e] flex items-center pl-[6px] pr-[3px] text-[10.300px] text-[#6a6a6a] justify-between">Box<Chev c="#555" /></div><Dot c="#6a6a6a" />
            </div>
          </div>
          <Head t="Custom Properties" open bg="bg-[#404040]" />
          <div className="bg-[#3a3a3a] h-[41px] pt-[9px] px-[9px] pr-[8px]">
            <div className="h-[18px] rounded-[3px] bg-[#5a5a5a] flex items-center justify-center text-[10.300px] text-[#e0e0e0]">Add</div>
          </div>
        </div>
      </div>
    </div>
  );
}

function StatusBar() {
  const items = [['l', 'Select', 'ml-[12px]', 'ml-[12px]'], ['r', 'Box Select', 'ml-[11px]', 'ml-[14px]'], ['m', 'Rotate View', 'ml-[96px]', 'ml-[11px]'], ['r', 'Object Context Menu', 'ml-[153px]', 'ml-[11px]']];
  return (
    <div className="h-[22px] bg-[#2d2d2d] border-t border-[#1d1d1d] flex items-center text-[10.100px] text-[#a8a8a8] shrink-0 pr-[10px]">
      {items.map(([s, t, a, b]) => (
        <React.Fragment key={t}><div className={a}><Mouse side={s} /></div><span className={b}>{t}</span></React.Fragment>
      ))}
      <span className="ml-auto">Collection | low_poly_curtainunwrap | Verts:938 | Faces:1,688 | Tris:1,688 | Objects:1/5 | 2.92.0</span>
    </div>
  );
}

export default function App() {
  return (
    <div className="w-[1811px] h-[1054px] bg-white pt-[25px] pl-[34px] font-['DejaVu_Sans',sans-serif] overflow-hidden">
      <div className="w-[1743px] h-[988px] rounded-[8px] overflow-hidden flex flex-col bg-[#1f1f1f] shadow-[0_10px_30px_rgba(0,0,0,.35)] border-t border-[#666]">
        <div className="h-[21px] bg-[#2d3035] flex items-center relative shrink-0 border-b border-[#111]">
          <div className="flex gap-[8px] pl-[9px]">
            <span className="w-[12px] h-[12px] rounded-full bg-[#55585c]" /><span className="w-[12px] h-[12px] rounded-full bg-[#55585c]" /><span className="w-[12px] h-[12px] rounded-full bg-[#55585c]" />
          </div>
          <div className="absolute left-[761px] top-[3px] flex items-center gap-[5px] text-[13.100px] text-[#70747a] font-['Liberation_Sans',sans-serif]">
            <svg width="12" height="14" viewBox="0 0 12 14"><path d="M1 0h7l3 3v11H1z" fill="#63666b" /></svg>
            curtain_v1_material_attempt.blend
          </div>
        </div>
        <TopBar />
        <div className="flex h-[916px] shrink-0 bg-[#1d1d1d]">
          <div className="w-[1406px] flex flex-col">
            <div className="h-[844px] flex shrink-0"><Viewport /><ImageEditor /></div>
            <Timeline />
          </div>
          <div className="w-[333px] ml-[3px] flex flex-col"><Outliner /><Properties /></div>
        </div>
        <StatusBar />
      </div>
    </div>
  );
}
